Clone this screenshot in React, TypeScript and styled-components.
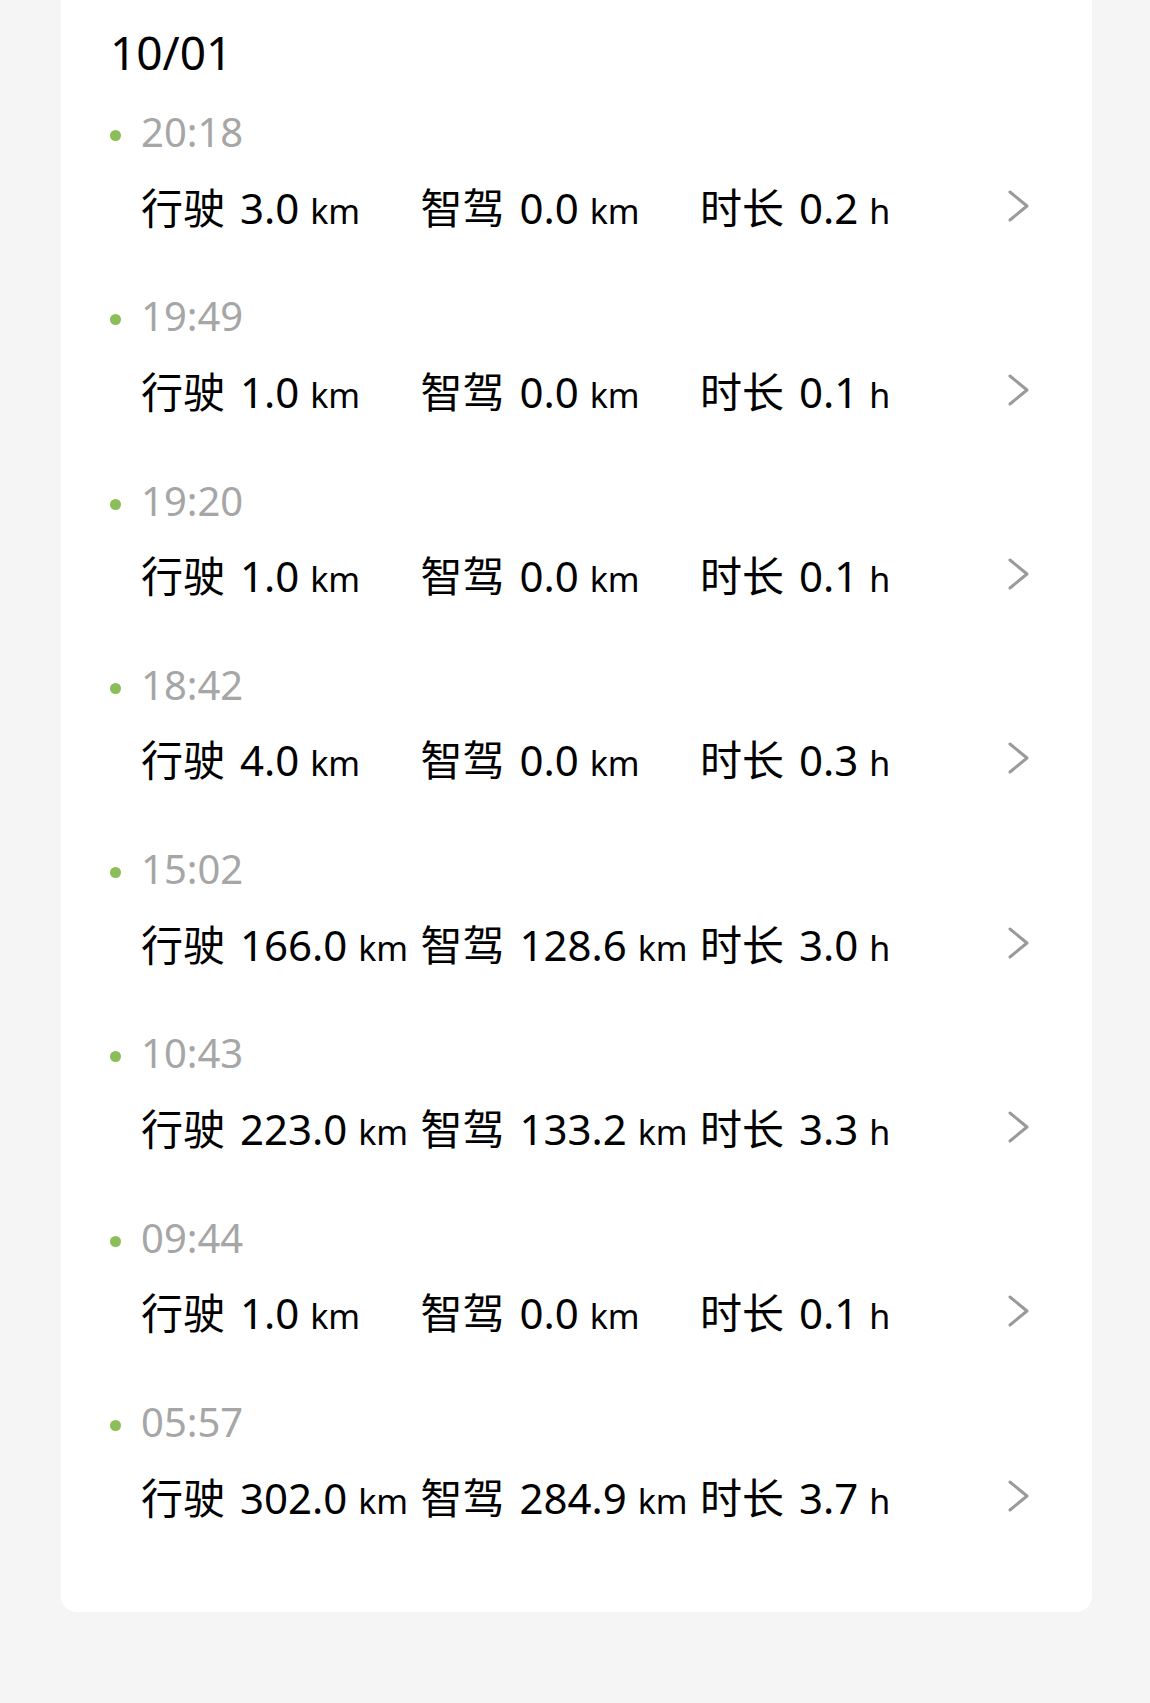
import * as React from "react";
import styled, { createGlobalStyle } from "styled-components";

interface ITrip {
  time: string;
  drive: string;
  smart: string;
  hours: string;
}

const trips: ITrip[] = [
  { time: "20:18", drive: "3.0", smart: "0.0", hours: "0.2" },
  { time: "19:49", drive: "1.0", smart: "0.0", hours: "0.1" },
  { time: "19:20", drive: "1.0", smart: "0.0", hours: "0.1" },
  { time: "18:42", drive: "4.0", smart: "0.0", hours: "0.3" },
  { time: "15:02", drive: "166.0", smart: "128.6", hours: "3.0" },
  { time: "10:43", drive: "223.0", smart: "133.2", hours: "3.3" },
  { time: "09:44", drive: "1.0", smart: "0.0", hours: "0.1" },
  { time: "05:57", drive: "302.0", smart: "284.9", hours: "3.7" }
];

const GlobalStyle = createGlobalStyle`
  html, body {
    margin: 0;
    padding: 0;
    background: #f5f5f5;
  }

  body {
    font-family: "Noto Sans", "Noto Sans CJK SC", sans-serif;
    -webkit-font-smoothing: antialiased;
  }

  #root {
    min-height: 1703px;
  }
`;

const Chevron = () => (
  <ChevronIcon width="24" height="32" viewBox="0 0 24 32" aria-hidden="true">
    <path
      d="M3 2 L20 16 L3 30"
      fill="none"
      stroke="#9a9a9a"
      strokeWidth="3"
      strokeLinecap="round"
      strokeLinejoin="round"
    />
  </ChevronIcon>
);

const Stat = ({ label, value, unit }: { label: string; value: string; unit: string }) => (
  <StatCell>
    <Label>{label}</Label> {value} <Unit>{unit}</Unit>
  </StatCell>
);

export default function App() {
  return (
    <Page>
      <GlobalStyle />
      <Card>
        <DateTitle>10/01</DateTitle>
        <TripList>
          {trips.map(trip => (
            <TripItem key={trip.time}>
              <TimeLine>
                <Dot />
                <TimeText>{trip.time}</TimeText>
              </TimeLine>
              <TripRow>
                <Stats>
                  <Stat label="行驶" value={trip.drive} unit="km" />
                  <Stat label="智驾" value={trip.smart} unit="km" />
                  <Stat label="时长" value={trip.hours} unit="h" />
                </Stats>
                <Chevron />
              </TripRow>
            </TripItem>
          ))}
        </TripList>
      </Card>
    </Page>
  );
}

const Page = styled.div`
  padding: 0 58px 0 61px;
`;

const Card = styled.section`
  background: #ffffff;
  border-radius: 0 0 16px 16px;
  padding: 22px 0 83px;
`;

const DateTitle = styled.h2`
  margin: 0 0 25px 49px;
  height: 60px;
  font-size: 46px;
  line-height: 60px;
  font-weight: 400;
  color: #000000;
`;

const TripList = styled.ul`
  list-style: none;
  margin: 0;
  padding: 0;
  display: flex;
  flex-direction: column;
  gap: 52.3px;
`;

const TripItem = styled.li`
  display: flex;
  flex-direction: column;
  gap: 22px;
  padding: 0 0 0 49px;
`;

const TimeLine = styled.div`
  display: flex;
  align-items: center;
  height: 50px;
`;

const Dot = styled.span`
  flex: none;
  width: 11px;
  height: 11px;
  margin: 7px 20px 0 0;
  border-radius: 50%;
  background: #8bbd58;
`;

const TimeText = styled.span`
  font-size: 40px;
  line-height: 50px;
  color: #a6a6a6;
`;

const TripRow = styled.div`
  display: flex;
  align-items: center;
  height: 60px;
  padding-left: 31px;
`;

const Stats = styled.div`
  display: grid;
  grid-template-columns: repeat(3, 279.5px);
`;

const StatCell = styled.span`
  font-size: 42px;
  line-height: 60px;
  color: #000000;
  white-space: nowrap;
`;

const Label = styled.span`
  margin-right: 4px;
`;

const Unit = styled.span`
  font-size: 34px;
`;

const ChevronIcon = styled.svg`
  flex: none;
  margin: 0 0 7px 27px;
`;
